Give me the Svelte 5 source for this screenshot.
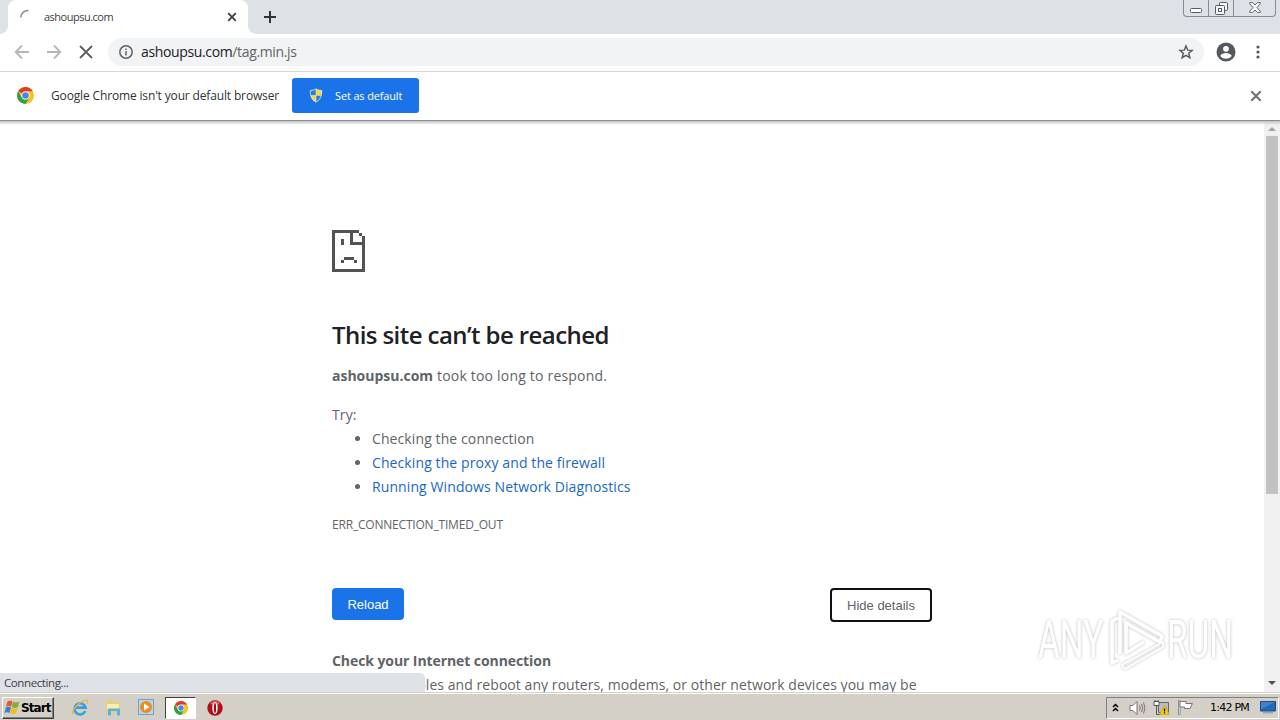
<script>
	const host = 'ashoupsu.com';

	const suggestions = [
		{ text: 'Checking the connection' },
		{ text: 'Checking the proxy and the firewall', link: true },
		{ text: 'Running Windows Network Diagnostics', link: true }
	];

	let tabOpen = $state(true);
	let infobarOpen = $state(true);
	let showDetails = $state(true);
</script>

{#snippet chromeLogo(size)}
	<svg width={size} height={size} viewBox="0 0 16 16">
		<circle cx="8" cy="8" r="8" fill="#fbc116" />
		<path d="M8 8 1.1 4A8 8 0 0 1 14.9 4H8Z" fill="#dc3b2e" />
		<path d="M1.1 4A8 8 0 0 0 8 16l3.5-6L8 8 4.5 10Z" fill="#2ba24c" />
		<circle cx="8" cy="8" r="3.9" fill="#fff" />
		<circle cx="8" cy="8" r="3.1" fill="#4688e8" />
	</svg>
{/snippet}

<div class="screen">
	<div class="tabstrip">
		<div class="lead"></div>
		{#if tabOpen}
			<div class="tab">
				<svg class="spinner" width="16" height="16" viewBox="0 0 16 16" fill="none">
					<path d="M.8 8.5A7 7 0 0 1 8.5 1.5" stroke="#8b8e92" stroke-width="1.6" />
				</svg>
				<span class="tab-title">{host}</span>
				<button class="tab-close" aria-label="Close tab" onclick={() => (tabOpen = false)}>
					<svg width="10" height="10" viewBox="0 0 10 10" stroke="#3c4043" stroke-width="1.8">
						<path d="m1.2 1.2 7.6 7.6M8.8 1.2 1.2 8.8" />
					</svg>
				</button>
			</div>
		{/if}
		<button class="new-tab" aria-label="New tab" onclick={() => (tabOpen = true)}>
			<svg width="12" height="12" viewBox="0 0 12 12" stroke="#303236" stroke-width="2">
				<path d="M6 0v12M0 6h12" />
			</svg>
		</button>
		<div class="window-buttons">
			<span class="win min">
				<svg width="12" height="5" viewBox="0 0 12 5" fill="#fff" stroke="#555a64">
					<rect x=".5" y=".5" width="11" height="4" rx="1" />
				</svg>
			</span>
			<span class="win max">
				<svg width="13" height="13" viewBox="0 0 13 13" fill="#f5f6f8" stroke="#555a64">
					<rect x="4.5" y=".5" width="8" height="8" rx="1" />
					<rect x=".5" y="3.5" width="9" height="9" rx="1" />
					<rect x="3.5" y="6.5" width="3" height="3" />
				</svg>
			</span>
			<span class="win close">
				<svg width="12" height="11" viewBox="0 0 12 11" fill="#f5f6f8" stroke="#555a64" stroke-width=".9">
					<path d="M.7.6h3L6 3 8.3.6h3v1.2L8 5.5l3.3 3.7v1.2h-3L6 8l-2.3 2.4h-3V9.2L4 5.5.7 1.8Z" />
				</svg>
			</span>
		</div>
	</div>

	<div class="toolbar">
		<svg class="nav" width="16" height="16" viewBox="0 0 16 16" fill="none" stroke="#b4b6b9" stroke-width="1.8">
			<path d="M15 8H2M8 1.5 1.7 8 8 14.5" />
		</svg>
		<svg class="nav" width="16" height="16" viewBox="0 0 16 16" fill="none" stroke="#b4b6b9" stroke-width="1.8">
			<path d="M1 8h13M8 1.5 14.3 8 8 14.5" />
		</svg>
		<svg class="nav" width="16" height="16" viewBox="0 0 16 16" stroke="#5b5e62" stroke-width="1.8">
			<path d="m2 2 12 12M14 2 2 14" />
		</svg>
		<div class="omnibox">
			<svg width="14" height="14" viewBox="0 0 14 14" fill="none" stroke="#5f6368" stroke-width="1.5">
				<circle cx="7" cy="7" r="6.2" />
				<path d="M7 6v4.500M7 3.4V5" />
			</svg>
			<span class="url">{host}<span class="path">/tag.min.js</span></span>
			<svg width="16" height="16" viewBox="0 0 16 16" fill="none" stroke="#55595e" stroke-width="1.4">
				<path d="m8 1.9 1.7 4.2 4.5.3-3.5 2.9 1.2 4.4L8 11.3l-3.9 2.4 1.2-4.4-3.5-2.9 4.500-.3Z" />
			</svg>
		</div>
		<svg class="avatar" width="20" height="20" viewBox="0 0 20 20">
			<circle cx="10" cy="10" r="9.5" fill="#55595e" />
			<circle cx="10" cy="6.8" r="2.9" fill="#fff" />
			<path d="M4.2 14c1.2-2 3.5-2.9 5.8-2.9s4.6.9 5.8 2.9A7 7 0 0 1 10 16.800 7 7 0 0 1 4.2 14Z" fill="#fff" />
		</svg>
		<svg class="menu" width="4" height="14" viewBox="0 0 4 14" fill="#55595e">
			<circle cx="2" cy="2" r="1.6" />
			<circle cx="2" cy="7" r="1.6" />
			<circle cx="2" cy="12" r="1.6" />
		</svg>
	</div>

	{#if infobarOpen}
		<div class="infobar">
			{@render chromeLogo(17)}
			<span class="info-text">Google Chrome isn't your default browser</span>
			<button class="set-default">
				<svg width="14" height="15" viewBox="0 0 14 15">
					<path d="M7 .5C5 1.8 3 2.2.8 2.2c0 5.5 1.2 9.800 6.2 12.300 5-2.500 6.2-6.800 6.2-12.300C11 2.2 9 1.8 7 .5Z" fill="#d9e3e8" />
					<path d="M6.7 1.6C5 2.500 3.500 3 1.600 3c0 1.600.1 3 .4 4.300h4.700Z" fill="#2f7dd0" />
					<path d="M7.300 1.600C9 2.500 10.500 3 12.400 3c0 1.600-.1 3-.4 4.300H7.300Z" fill="#f7d838" />
					<path d="M2.200 7.800C3 10.500 4.300 12.300 6.700 13.600V7.800Z" fill="#f7d838" />
					<path d="M11.800 7.800c-.8 2.700-2.100 4.500-4.500 5.800V7.800Z" fill="#2f7dd0" />
				</svg>
				<span>Set as default</span>
			</button>
			<button class="info-close" aria-label="Close" onclick={() => (infobarOpen = false)}>
				<svg width="12" height="12" viewBox="0 0 12 12" stroke="#6b6f74" stroke-width="2">
					<path d="m1.300 1.300 9.400 9.400M10.700 1.300 1.300 10.700" />
				</svg>
			</button>
		</div>
	{/if}

	<div class="viewport">
		<main class="page">
			<svg class="sad" width="33" height="42" viewBox="0 0 33 42" fill="#535353" shape-rendering="crispEdges">
				<path d="M0 0h27v3h3v3h3v36H0ZM3 3v36h27V15H18V3ZM21 3v9h9V6h-3V3Z" fill-rule="evenodd" />
				<path d="M9 9h3v6H9ZM12 27h10v3H12ZM9 30h3v3H9ZM22 30h3v3h-3Z" />
			</svg>
			<h1>This site can’t be reached</h1>
			<p class="summary"><strong>{host}</strong> took too long to respond.</p>
			<p class="try">Try:</p>
			<ul>
				{#each suggestions as item}
					<li>
						{#if item.link}<a href="#top">{item.text}</a>{:else}{item.text}{/if}
					</li>
				{/each}
			</ul>
			<div class="code">ERR_CONNECTION_TIMED_OUT</div>
			<div class="buttons">
				<button class="reload">Reload</button>
				<button class="details" onclick={() => (showDetails = !showDetails)}>
					{showDetails ? 'Hide' : 'Show'} details
				</button>
			</div>
			{#if showDetails}
				<h2>Check your Internet connection</h2>
				<p class="help">Check any cables and reboot any routers, modems, or other network devices you may be</p>
			{/if}
		</main>
		<div class="scrollbar">
			<div class="arrow up"></div>
			<div class="thumb"></div>
			<div class="arrow down"></div>
		</div>
		<div class="status">Connecting...</div>
		<div class="watermark">
			<span class="any">ANY</span>
			<svg width="58" height="64" viewBox="0 0 58 64" fill="none" stroke="#fff" stroke-width="3.6" stroke-linejoin="round">
				<path d="M9 10 3 13v42l6-3M11 46V4l42 24-2 6-34-19v30l18-11" />
				<path d="M54 34 13 57l3 4 38-22Z" stroke-width="2" />
			</svg>
			<span class="run">RUN</span>
		</div>
	</div>

	<div class="taskbar">
		<button class="start">
			<svg width="17" height="15" viewBox="0 0 16 15">
				<path d="M3 1.500c2-1.300 3.500-1 5 0L6.700 6.800C5 5.800 3.500 5.800 1.500 6.800Z" fill="#e5592b" />
				<path d="M8.500 1.800c1.800 1 3.500 1 6.300-.3l-1.500 5.800c-2 1-3.800 1-5.900-.2Z" fill="#78b33c" />
				<path d="M1.300 7.400c2-1 3.500-.9 5.200 0L5 12.900c-1.700-1-3.300-1-5 0Z" fill="#3b7fd0" />
				<path d="M7.200 7.700c1.800 1 3.800 1.100 5.900 0l-1.500 5.700c-2 1-3.900.8-5.800-.2Z" fill="#f4bd28" />
			</svg>
			<span>Start</span>
		</button>
		<div class="quick">
			<svg width="18" height="17" viewBox="0 0 18 17" fill="none">
				<path d="M14.300 12A5.600 5.600 0 1 1 14.600 8.600H5" stroke="#3a9fdf" stroke-width="2.600" />
				<path d="M2 15.500C-1 13 8 2 14.500 1.300c2.500-.3 2.800 1.500 1.500 3.200" stroke="#e9b83a" stroke-width="1.200" />
			</svg>
			<svg width="17" height="16" viewBox="0 0 17 16">
				<path d="M1 1h6l1 1.500h7V13H1Z" fill="#e8cf74" />
				<path d="M2 4h12v5H2Z" fill="#f9eeb2" />
				<path d="M3 15.500V8.500h12v7h-3V11H6v4.500Z" fill="#5cb3da" />
			</svg>
			<svg width="17" height="17" viewBox="0 0 17 17">
				<rect x=".5" y=".5" width="15" height="15" fill="#b9d7ec" stroke="#6fa0c8" />
				<circle cx="8" cy="8" r="6" fill="#f08a1c" />
				<path d="M6 4.500v7L11.500 8Z" fill="#fff" />
			</svg>
		</div>
		<div class="task-active">{@render chromeLogo(14)}</div>
		<svg class="opera" width="16" height="16" viewBox="0 0 16 16">
			<circle cx="8" cy="8" r="7.700" fill="#b30f17" />
			<path d="M3 3a7 7 0 0 1 10 0L10 6H6Z" fill="#dd5b5c" />
			<ellipse cx="8" cy="8" rx="2.700" ry="6" fill="#fff" />
			<ellipse cx="8" cy="8" rx="1.100" ry="5" fill="#a10c14" />
		</svg>
		<div class="tray">
			<svg width="7" height="9" viewBox="0 0 7 9" fill="none" stroke="#000" stroke-width="1.500">
				<path d="m1 4 2.500-2.500L6 4M1 8l2.500-2.500L6 8" />
			</svg>
			<svg class="sound" width="17" height="14" viewBox="0 0 17 14" fill="none" stroke="#777">
				<path d="M1 4.500h3l4-4v13l-4-4H1Z" fill="#fff" />
				<path d="M10.500 4.500q1.500 2.500 0 5M12.500 3q2.500 4 0 8M14.500 1.500q3 5.500 0 11" />
			</svg>
			<svg class="network" width="17" height="15" viewBox="0 0 17 15">
				<path d="M5.500 2.500h10v10h-10Z" fill="#b9bdc1" stroke="#666" />
				<path d="M3.500 5.500v9h4" fill="none" stroke="#555" />
				<path d="M1 1.500h5v4H1ZM2 0v2M5 0v2" fill="#fff" stroke="#555" />
				<path d="m11.500 5.500 5 9h-10Z" fill="#f7d000" stroke="#c79a00" stroke-width=".6" />
				<path d="M11.500 8.500v3M11.500 12.300v1.200" stroke="#000" stroke-width="1.200" />
			</svg>
			<svg class="flag" width="17" height="15" viewBox="0 0 17 15" stroke="#777">
				<path d="M1.500.5h1.500V15H1.500Z" fill="#fff" stroke-width=".8" />
				<path d="M3 1.500h6v2h6.500L13 8.500H7.500V7H3Z" fill="#fff" />
			</svg>
			<span class="clock">1:42 PM</span>
			<svg class="desktop" width="16" height="13" viewBox="0 0 16 13">
				<path d="M.5.5h15v9.500H.5Z" fill="#2467b8" stroke="#264a7a" />
				<path d="M1 1h14L1 8Z" fill="#3f83cf" />
				<path d="M3 11h10v1.500H3Z" fill="#8ea9c4" />
			</svg>
		</div>
	</div>
</div>

<style>
	:global(body) {
		margin: 0;
		overflow: hidden;
	}

	.screen {
		display: flex;
		flex-direction: column;
		width: 1280px;
		height: 720px;
		background: #fff;
		font-family: 'Open Sans', 'Noto Sans', sans-serif;
		overflow: hidden;
	}

	button {
		border: 0;
		padding: 0;
		background: none;
		font-family: inherit;
	}

	svg {
		display: block;
		flex: none;
	}

	.tabstrip {
		display: flex;
		flex: none;
		height: 34px;
		background: #dee1e6;
	}

	.lead {
		width: 8px;
		background: radial-gradient(circle at 0 0, #dee1e6 7.5px, #fff 8px) 0 26px / 8px 8px no-repeat;
	}

	.tab {
		display: flex;
		align-items: center;
		box-sizing: border-box;
		width: 240px;
		padding: 0 11px 0 12px;
		background: #fff;
		border-radius: 8px 8px 0 0;
	}

	.spinner {
		margin-right: 8px;
	}

	.tab-title {
		flex: 1;
		padding-bottom: 1px;
		font-size: 11px;
		letter-spacing: -0.5px;
		color: #3c4043;
	}

	.new-tab {
		display: flex;
		align-items: center;
		width: 36px;
		padding-left: 16px;
		background: radial-gradient(circle at 8px 0, #dee1e6 7.5px, #fff 8px) 0 26px / 8px 8px no-repeat;
	}

	.window-buttons {
		display: flex;
		box-sizing: border-box;
		height: 17px;
		margin: 0 4px 0 auto;
		border: 1px solid #858b97;
		border-top: 0;
		border-radius: 0 0 4px 4px;
	}

	.win {
		display: flex;
		align-items: flex-end;
		justify-content: center;
		box-sizing: border-box;
		padding-bottom: 3px;
	}

	.win + .win {
		border-left: 1px solid #858b97;
	}

	.min {
		width: 24px;
	}

	.max {
		width: 25px;
		padding-bottom: 1px;
	}

	.close {
		width: 42px;
	}

	.toolbar {
		display: flex;
		flex: none;
		align-items: center;
		box-sizing: border-box;
		height: 38px;
		padding: 0 20px 2px 14px;
		border-bottom: 1px solid #d5d7da;
	}

	.nav {
		margin-right: 16px;
	}

	.omnibox {
		display: flex;
		flex: 1;
		align-items: center;
		box-sizing: border-box;
		height: 28px;
		margin-left: -2px;
		padding: 0 10px 0 11px;
		border-radius: 14px;
		background: #f1f3f4;
	}

	.url {
		flex: 1;
		margin-left: 8px;
		font-size: 14px;
		line-height: 18px;
		letter-spacing: -0.36px;
		color: #202124;
	}

	.path {
		color: #5f6368;
	}

	.avatar {
		margin-left: 12px;
	}

	.menu {
		margin-left: 20px;
	}

	.infobar {
		display: flex;
		flex: none;
		align-items: center;
		box-sizing: border-box;
		height: 49px;
		padding: 0 18px 1px 17px;
		border-bottom: 1px solid #8d8d8d;
	}

	.info-text {
		width: 228px;
		margin-left: 17px;
		font-size: 12px;
		letter-spacing: -0.15px;
		white-space: nowrap;
		color: #303236;
	}

	.set-default {
		display: flex;
		align-items: center;
		box-sizing: border-box;
		width: 127px;
		height: 35px;
		margin-left: 13px;
		padding-left: 17px;
		border-radius: 3px;
		background: #1a73e8;
		font-size: 11px;
		letter-spacing: -0.15px;
		color: #fff;
	}

	.set-default span {
		margin-left: 12px;
		padding-bottom: 1px;
	}

	.info-close {
		margin-left: auto;
	}

	.viewport {
		position: relative;
		display: flex;
		flex: 1;
		min-height: 0;
		overflow: hidden;
		background: linear-gradient(#c4c4c4, #fff 4px);
	}

	.page {
		box-sizing: border-box;
		width: 600px;
		margin-left: 332px;
		padding-top: 109px;
		color: #5f6368;
		font-size: 14px;
		line-height: 24px;
		letter-spacing: 0.1px;
	}

	h1 {
		margin: 47px 0 0;
		font-size: 24px;
		font-weight: 600;
		line-height: 31px;
		letter-spacing: -0.58px;
		color: #202124;
		white-space: nowrap;
	}

	p {
		margin: 0;
		white-space: nowrap;
	}

	.summary {
		margin-top: 14px;
		letter-spacing: 0.2px;
	}

	.summary strong {
		letter-spacing: 0;
	}

	.try {
		margin-top: 15px;
	}

	ul {
		margin: 0;
		padding-left: 40px;
	}

	li {
		white-space: nowrap;
	}

	a {
		color: #1967c5;
		text-decoration: none;
	}

	.code {
		margin-top: 14px;
		font-size: 12px;
		letter-spacing: -0.2px;
	}

	.buttons {
		display: flex;
		justify-content: space-between;
		margin-top: 51px;
	}

	.reload,
	.details {
		box-sizing: border-box;
		font-family: 'Liberation Sans', sans-serif;
		font-size: 13px;
	}

	.reload {
		width: 72px;
		height: 32px;
		border-radius: 4px;
		background: #1a73e8;
		color: #fff;
	}

	.details {
		width: 102px;
		height: 34px;
		border: 2px solid #101010;
		border-radius: 4px;
		background: #fff;
		color: #5f6368;
	}

	h2 {
		margin: 27px 0 0;
		font-size: 14px;
		font-weight: 700;
		line-height: 24px;
		letter-spacing: -0.08px;
	}

	.help {
		letter-spacing: 0.06px;
	}

	.scrollbar {
		display: flex;
		flex-direction: column;
		align-items: center;
		width: 16px;
		margin-left: auto;
		background: linear-gradient(#c4c4c4, #f1f1f1 4px);
	}

	.arrow {
		border: 4px solid transparent;
	}

	.up {
		margin: 3px 0 5px;
		border-bottom-color: #a3a3a3;
		border-top-width: 3px;
	}

	.down {
		margin: auto 0 3px;
		border-top-color: #505050;
	}

	.thumb {
		width: 12px;
		height: 358px;
		background: #c1c1c1;
	}

	.status {
		position: absolute;
		bottom: 0;
		left: 0;
		box-sizing: border-box;
		width: 425px;
		height: 19px;
		padding-left: 4px;
		border-radius: 0 5px 0 0;
		background: #dee1e6;
		font-size: 11.5px;
		line-height: 20px;
		letter-spacing: -0.4px;
		color: #3c4043;
	}

	.watermark {
		position: absolute;
		right: 47px;
		bottom: 20px;
		display: flex;
		align-items: center;
		color: #fff;
		font-family: Roboto, sans-serif;
		font-size: 53px;
		line-height: 64px;
		filter: drop-shadow(0 0 1.5px #bbb);
	}

	.any,
	.run {
		width: 66px;
		transform: scaleX(0.63);
		transform-origin: 0 0;
	}

	.any {
		width: 71px;
	}

	.taskbar {
		display: flex;
		flex: none;
		align-items: center;
		box-sizing: border-box;
		height: 28px;
		padding: 2px 0 0 2px;
		border-top: 1px solid #d4d0c8;
		background: #d4d0c8;
		box-shadow: inset 0 1px #fff;
	}

	.start {
		display: flex;
		align-items: center;
		box-sizing: border-box;
		width: 52px;
		height: 22px;
		padding-left: 1px;
		border: 1px solid;
		border-color: #fff #404040 #404040 #fff;
		box-shadow: inset -1px -1px #808080;
		font-family: 'DejaVu Sans', sans-serif;
		font-size: 12px;
		font-weight: 700;
		color: #000;
	}

	.start span {
		letter-spacing: -0.9px;
	}

	.quick {
		display: flex;
		align-items: center;
		gap: 16px;
		margin-left: 17px;
	}

	.task-active {
		display: flex;
		align-items: center;
		justify-content: center;
		box-sizing: border-box;
		width: 31px;
		height: 22px;
		margin-left: 10px;
		border: 1px solid;
		border-color: #404040 #fff #fff #404040;
		background: #fff;
	}

	.opera {
		margin-left: 11px;
	}

	.tray {
		display: flex;
		align-items: center;
		box-sizing: border-box;
		width: 173px;
		height: 22px;
		margin: 0 1px 0 auto;
		padding-left: 5px;
		border: 1px solid;
		border-color: #808080 #fff #fff #808080;
	}

	.sound {
		margin-left: 10px;
	}

	.network {
		margin-left: 7px;
	}

	.flag {
		margin-left: 7px;
	}

	.clock {
		width: 41px;
		margin-left: 16px;
		font-family: 'DejaVu Sans', sans-serif;
		font-size: 11px;
		letter-spacing: -0.75px;
		white-space: nowrap;
		color: #000;
	}

	.desktop {
		margin-left: 9px;
	}
</style>
